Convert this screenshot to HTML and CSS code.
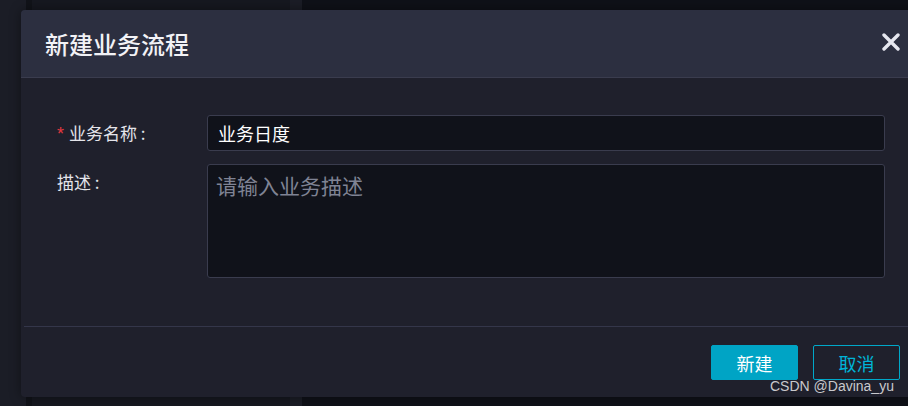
FILE: index.html
```html
<!DOCTYPE html>
<html lang="zh-CN">
<head>
    <meta charset="UTF-8">
    <title>新建业务流程</title>
    <link rel="stylesheet" href="styles.css">
</head>
<body>
    <div class="backdrop">
        <div class="col col-side"></div>
        <div class="col col-gap"></div>
        <div class="col col-tree"></div>
        <div class="col col-split"></div>
        <div class="col col-main"></div>
    </div>

    <div class="modal">
        <div class="modal-header">
            <h2>新建业务流程</h2>
            <svg class="close" width="18" height="18" viewBox="0 0 18 18">
                <path d="M2 2 L16 16 M16 2 L2 16" stroke="#e6e7ef" stroke-width="3.4" stroke-linecap="round"/>
            </svg>
        </div>

        <div class="modal-body">
            <div class="form-row">
                <label class="label"><span class="required">*</span>业务名称 :</label>
                <div class="input">业务日度</div>
            </div>
            <div class="form-row">
                <label class="label">描述 :</label>
                <div class="textarea">请输入业务描述</div>
            </div>
        </div>

        <div class="modal-footer">
            <button class="btn btn-primary">新建</button>
            <button class="btn btn-ghost">取消</button>
        </div>
    </div>

    <div class="watermark">CSDN @Davina_yu</div>
</body>
</html>
```

FILE: styles.css
```css
body { margin: 0; overflow: hidden; font-family: "Noto Sans CJK SC", sans-serif; background: #0f1118; }
.backdrop { display: flex; height: 406px; }
.col { height: 100%; }
.col-side { width: 26px; background: #1b1d26; }
.col-gap { width: 6px; background: #111319; }
.col-tree { width: 258px; background: #161820; }
.col-split { width: 12px; background: #1b1d26; }
.col-main { flex: 1; background: #0f1118; }

.modal { position: absolute; left: 21px; top: 10px; width: 900px; height: 387px; background: #1f202c; border-radius: 4px; overflow: hidden; box-shadow: 0 0 12px rgba(0,0,0,0.4); }
.modal-header { height: 67px; display: flex; align-items: center; justify-content: space-between; padding: 0 21px 0 24px; background: #2c2f40; border-bottom: 1px solid #3a3c4e; }
.modal-header h2 { margin: 0; font-size: 24px; font-weight: 500; color: #f2f2f6; }
.close { margin-top: -3px; }

.modal-body { height: 248px; box-sizing: border-box; padding: 37px 0 0 36px; display: flex; flex-direction: column; gap: 12px; }
.form-row { display: flex; align-items: flex-start; }
.label { width: 150px; line-height: 36px; font-size: 17px; color: #e4e4ea; }
.required { color: #e5393f; margin-right: 5px; font-size: 18px; font-family: "Liberation Sans", sans-serif; }
.input, .textarea { width: 678px; box-sizing: border-box; background: #10121a; border: 1px solid #3a3c4e; border-radius: 3px; padding: 0 10px; }
.input { height: 36px; line-height: 34px; font-size: 18px; color: #ffffff; }
.textarea { height: 114px; padding-top: 4px; font-size: 21px; line-height: 32px; color: #7f8394; padding-left: 8px; }

.modal-footer { margin-left: 3px; border-top: 1px solid #34364a; height: 70px; box-sizing: border-box; padding: 18px 21px 0 0; display: flex; justify-content: flex-end; align-items: flex-start; gap: 15px; }
.btn { width: 87px; height: 35px; border-radius: 2px; font-family: "Noto Sans CJK SC", sans-serif; font-size: 18px; padding: 0; cursor: pointer; }
.btn-primary { background: #00a4c5; border: 1px solid #00a4c5; color: #ffffff; }
.btn-ghost { background: transparent; border: 1px solid #00a8c9; color: #00b4d8; }

.watermark { position: absolute; left: 770px; top: 378px; font-family: "Liberation Sans", Arial, sans-serif; font-size: 14px; color: #c9c9cc; }
```
